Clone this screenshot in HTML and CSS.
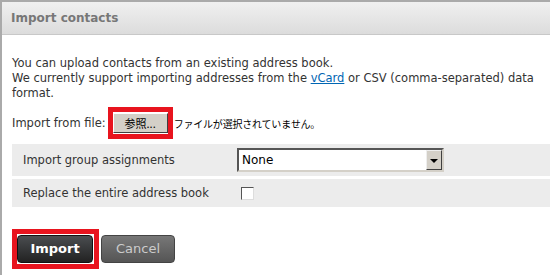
FILE: index.html
```html
<!DOCTYPE html>
<html>
<head>
	<meta charset="utf-8">
	<title>Import contacts</title>
<link rel="stylesheet" href="styles.css">
</head>

<body>

<div id="dlg_import">
<div id="dlg_title">Import contacts</div>

<div id="dlg_body">
<p id="txt_hint">You can upload contacts from an existing address book.</p>
<p id="txt_hint2">We currently support importing addresses from the <a href="#">vCard</a> or CSV (comma-separated) data<br>format.</p>

<div id="row_file">
<span id="lbl_file">Import from file:</span>
<span class="mark"><span id="btn_browse">参照...</span></span>
<span id="txt_nofile">ファイルが選択されていません。</span>
</div>

<table id="tbl_opts">
<tr>
<td class="lbl">Import group assignments</td>
<td>
<div id="sel_groups">
<span class="sel_val">None</span>
<span class="sel_arrow"><i></i></span>
</div>
</td>
</tr>
<tr>
<td class="lbl">Replace the entire address book</td>
<td><span id="chk_replace"></span></td>
</tr>
</table>
</div>

<div id="row_buttons">
<span class="mark mark_btn"><span id="btn_import" class="btn">Import</span></span>
<span id="btn_cancel" class="btn">Cancel</span>
</div>
</div>

</body>
</html>
```

FILE: styles.css
```css
body {
	margin: 0;
	background-color: #fff;
	font-family: "DejaVu Sans", Verdana, sans-serif;
	font-size: 11.5px;
	color: #333;
}

#dlg_import {
	height: 273px;
	border-top: #aaa 2px solid;
	border-left: #aaa 2px solid;
}

#dlg_title {
	height: 32px;
	padding-left: 9px;
	line-height: 32px;

	background: linear-gradient(#f0f0f0, #dcdcdc);
	border-bottom: #c8c8c8 1px solid;

	font-size: 12px;
	font-weight: bold;
	color: #777;
}

#dlg_body {
	padding: 21px 0 0 10px;
}

#txt_hint, #txt_hint2 {
	margin: 0;
	line-height: 15px;
}

#txt_hint2 a {
	color: #0066b3;
}

#row_file {
	display: flex;
	align-items: center;
	height: 34px;
	margin-top: 5px;
}

.mark {
	display: inline-block;
	border: #e8141e 5px solid;
}

#row_file .mark {
	margin-left: 2px;
	padding: 1px 0 1px 0;
}

#btn_browse {
	display: block;
	width: 53px;
	height: 18px;

	background-color: #d4d0c8;
	border: 1px solid;
	border-color: #fff #404040 #404040 #fff;

	font-family: "Noto Sans CJK JP", sans-serif;
	font-size: 11px;
	line-height: 18px;
	text-align: center;
	color: #000;
}

#txt_nofile {
	margin-left: 1px;
	font-family: "Noto Sans CJK JP", sans-serif;
	font-size: 10px;
	letter-spacing: -0.2px;
	color: #000;
}

#tbl_opts {
	width: 100%;
	margin-top: 1px;
	border-collapse: separate;
	border-spacing: 0 3px;
}

#tbl_opts td {
	padding: 0;
	background-color: #ececec;
}

#tbl_opts td.lbl {
	width: 214px;
	padding-left: 11px;
}

#tbl_opts tr:first-child td {
	height: 32px;
}

#tbl_opts tr:last-child td {
	height: 28px;
}

#sel_groups {
	display: flex;
	width: 203px;
	height: 20px;

	background-color: #fff;
	border: 2px solid;
	border-color: #555 #d4d0c8 #d4d0c8 #555;
}

.sel_val {
	flex: 1;
	padding-left: 3px;
	line-height: 20px;
	font-size: 12px;
	color: #000;
}

.sel_arrow {
	display: flex;
	align-items: center;
	justify-content: center;
	width: 14px;

	background-color: #d4d0c8;
	border: 1px solid;
	border-color: #eee #404040 #404040 #eee;
}

.sel_arrow i {
	border-top: #000 4px solid;
	border-left: 4px solid transparent;
	border-right: 4px solid transparent;
	margin-top: 1px;
}

#chk_replace {
	display: block;
	width: 11px;
	height: 11px;
	margin-left: 4px;

	background-color: #fff;
	border: 1px solid;
	border-color: #555 #ddd #ddd #555;
}

#row_buttons {
	display: flex;
	align-items: center;
	gap: 2px;
	margin-top: 19px;
	padding-left: 10px;
}

.mark_btn {
	padding: 1px 1px 1px 0;
}

.btn {
	display: inline-block;
	height: 26px;
	border-radius: 4px;

	font-size: 13px;
	line-height: 26px;
	text-align: center;
}

#btn_import {
	width: 74px;
	background: linear-gradient(#4a4d50, #222);
	border: #111 1px solid;

	font-weight: bold;
	color: #fff;
}

#btn_cancel {
	width: 72px;
	background: linear-gradient(#777, #555);
	border: #444 1px solid;

	color: #ccc;
}
```
